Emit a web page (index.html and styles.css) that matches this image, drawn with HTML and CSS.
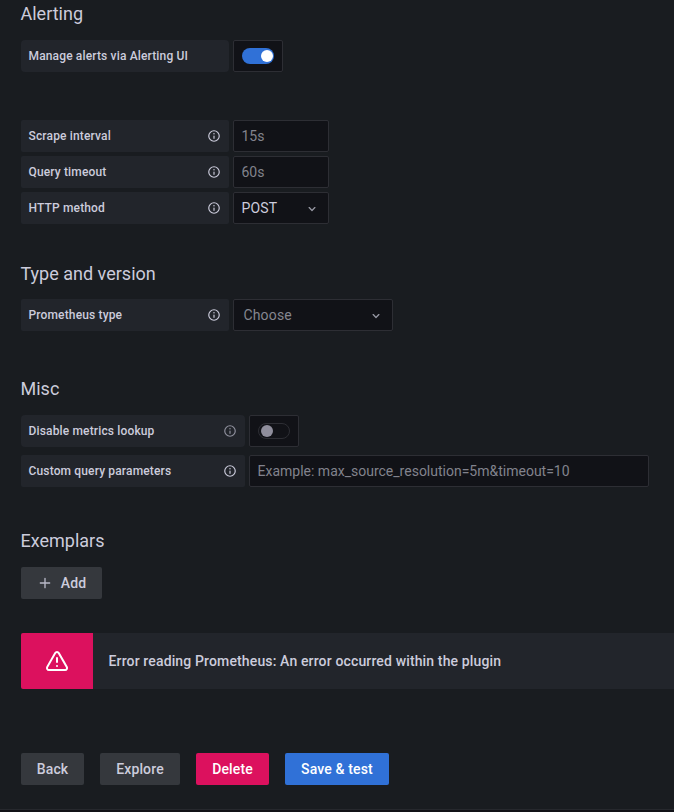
FILE: index.html
```html
<!DOCTYPE html>
<html lang="en">
<head>
<meta charset="utf-8">
<title>Prometheus settings</title>
<link rel="stylesheet" href="styles.css">
</head>
<body>
<svg class="defs" aria-hidden="true">
  <symbol id="info" viewBox="0 0 24 24"><path d="M12,2A10,10,0,1,0,22,12,10,10,0,0,0,12,2Zm0,18a8,8,0,1,1,8-8A8,8,0,0,1,12,20Zm0-9a1,1,0,0,0-1,1v4a1,1,0,0,0,2,0V12A1,1,0,0,0,12,11Zm0-4a1.25,1.25,0,1,0,1.25,1.25A1.25,1.25,0,0,0,12,7Z"/></symbol>
  <symbol id="angle" viewBox="0 0 24 24"><path d="M17,9.17a1,1,0,0,0-1.41,0L12,12.71,8.46,9.17a1,1,0,0,0-1.41,0,1,1,0,0,0,0,1.42l4.24,4.24a1,1,0,0,0,1.42,0L17,10.59A1,1,0,0,0,17,9.17Z"/></symbol>
  <symbol id="plus" viewBox="0 0 24 24"><path d="M19,11H13V5a1,1,0,0,0-2,0v6H5a1,1,0,0,0,0,2h6v6a1,1,0,0,0,2,0V13h6a1,1,0,0,0,0-2Z"/></symbol>
  <symbol id="warn" viewBox="0 0 24 24"><path d="M12,16a1,1,0,1,0,1,1A1,1,0,0,0,12,16Zm10.67,1.47-8.05-14a3,3,0,0,0-5.24,0l-8,14A3,3,0,0,0,3.94,22H20.06a3,3,0,0,0,2.61-4.53Zm-1.73,2a1,1,0,0,1-.88.51H3.94a1,1,0,0,1-.88-.51,1,1,0,0,1,0-1l8-14a1,1,0,0,1,1.78,0l8.05,14A1,1,0,0,1,20.94,19.49ZM12,8a1,1,0,0,0-1,1v4a1,1,0,0,0,2,0V9A1,1,0,0,0,12,8Z"/></symbol>
</svg>
<main class="panel">
  <section class="alerting">
    <h3>Alerting</h3>
    <div class="row"><div class="label round">Manage alerts via Alerting UI</div><div class="switch-box"><span class="switch on"></span></div></div>
  </section>
  <section class="http">
    <div class="row"><div class="label">Scrape interval<svg class="info"><use href="#info"/></svg></div><input class="input short" placeholder="15s"></div>
    <div class="row"><div class="label">Query timeout<svg class="info"><use href="#info"/></svg></div><input class="input short" placeholder="60s"></div>
    <div class="row"><div class="label">HTTP method<svg class="info"><use href="#info"/></svg></div><div class="select short">POST<svg class="angle"><use href="#angle"/></svg></div></div>
  </section>
  <section class="type">
    <h3>Type and version</h3>
    <div class="row"><div class="label">Prometheus type<svg class="info"><use href="#info"/></svg></div><div class="select choose">Choose<svg class="angle"><use href="#angle"/></svg></div></div>
  </section>
  <section class="misc">
    <h3>Misc</h3>
    <div class="row"><div class="label wide round">Disable metrics lookup<svg class="info dim"><use href="#info"/></svg></div><div class="switch-box"><span class="switch"></span></div></div>
    <div class="row"><div class="label wide">Custom query parameters<svg class="info"><use href="#info"/></svg></div><input class="input long" placeholder="Example: max_source_resolution=5m&amp;timeout=10"></div>
  </section>
  <section class="exemplars">
    <h3>Exemplars</h3>
    <button class="btn add"><svg class="plus"><use href="#plus"/></svg>Add</button>
  </section>
  <div class="alert">
    <div class="alert-icon"><svg class="warn"><use href="#warn"/></svg></div>
    <div class="alert-text">Error reading Prometheus: An error occurred within the plugin</div>
  </div>
  <div class="actions">
    <button class="btn back">Back</button>
    <button class="btn explore">Explore</button>
    <button class="btn delete">Delete</button>
    <button class="btn save">Save &amp; test</button>
  </div>
</main>
</body>
</html>
```
FILE: styles.css
```css
* { box-sizing: border-box; }
body {
  margin: 0;
  height: 812px;
  overflow: hidden;
  background: #111217;
  color: #ccccdc;
  font: 400 14px/22px Roboto, sans-serif;
  letter-spacing: 0.15px;
}
.defs { display: none; }
svg { fill: currentColor; flex: none; }
.panel {
  height: 810px;
  padding: 3px 0 0 21px;
  background: #191c20;
  border-bottom: 1px solid #26282d;
}
h3 {
  margin: 0 0 15px -0.5px;
  font-size: 18px;
  font-weight: 400;
  line-height: 22px;
  letter-spacing: 0;
}
.row { display: flex; gap: 4px; height: 32px; }
.label {
  display: flex;
  align-items: center;
  justify-content: space-between;
  width: 208px;
  padding: 0 8px 0 7.5px;
  border-radius: 2px;
  background: #22252b;
  font-size: 12px;
  font-weight: 500;
}
.label.round { border-radius: 4px; }
.label.wide { width: 224px; }
.info { width: 14px; height: 14px; }
.info.dim { opacity: 0.65; }
.input, .select, .switch-box {
  border: 1px solid #2d2e34;
  border-radius: 2px;
  background: #111217;
}
.input {
  padding: 0 7.5px;
  color: #ccccdc;
  font: inherit;
  letter-spacing: 0;
  outline: none;
}
.input::placeholder { color: #82838d; opacity: 1; }
.select {
  display: flex;
  align-items: center;
  justify-content: space-between;
  padding: 0 8px 0 7.5px;
}
.short { width: 96px; }
.long { width: 400px; }
.choose { width: 160px; padding-left: 9.5px; color: #85868f; }
.angle { width: 16px; height: 16px; margin-top: 1px; color: #9697a2; }
.switch-box {
  display: flex;
  align-items: center;
  justify-content: center;
  width: 50px;
}
.switch {
  display: flex;
  align-items: center;
  width: 32px;
  height: 16px;
  padding: 0 2px;
  border: 1px solid #2d2e34;
  border-radius: 8px;
}
.switch::after {
  content: "";
  width: 12px;
  height: 12px;
  border-radius: 50%;
  background: #8f8e9c;
}
.switch.on {
  justify-content: flex-end;
  padding: 0 1px;
  border: 0;
  background: #3071d7;
}
.switch.on::after { background: #fff; }
.http { display: grid; gap: 4px; margin-top: 48px; }
.type { margin-top: 39px; }
.type .row { margin-top: -1px; }
.misc { margin-top: 47px; }
.misc .row + .row { margin-top: 8px; }
.exemplars { margin-top: 43px; }
.btn {
  display: flex;
  align-items: center;
  justify-content: center;
  height: 32px;
  padding: 0;
  border: 0;
  border-radius: 2px;
  background: #35383d;
  color: #ccccdc;
  font: 500 14px/30px Roboto, sans-serif;
  letter-spacing: 0.14px;
}
.add { width: 81px; gap: 8px; }
.plus { width: 16px; height: 16px; color: #b9b9c8; }
.alert {
  display: flex;
  height: 56px;
  margin-top: 34px;
  border-radius: 2px 0 0 2px;
  background: #22252b;
  overflow: hidden;
}
.alert-icon {
  display: grid;
  place-items: center;
  width: 72px;
  background: #dc115e;
  color: #fff;
}
.warn { width: 24px; height: 24px; }
.alert-text { padding: 17px 15.5px; font-weight: 500; letter-spacing: 0.14px; }
.actions { display: flex; gap: 16px; margin-top: 64px; }
.back { width: 63px; }
.explore { width: 80px; }
.delete { width: 73px; background: #dc115e; color: #fff; }
.save { width: 104px; background: #3071d7; color: #fff; }
```
